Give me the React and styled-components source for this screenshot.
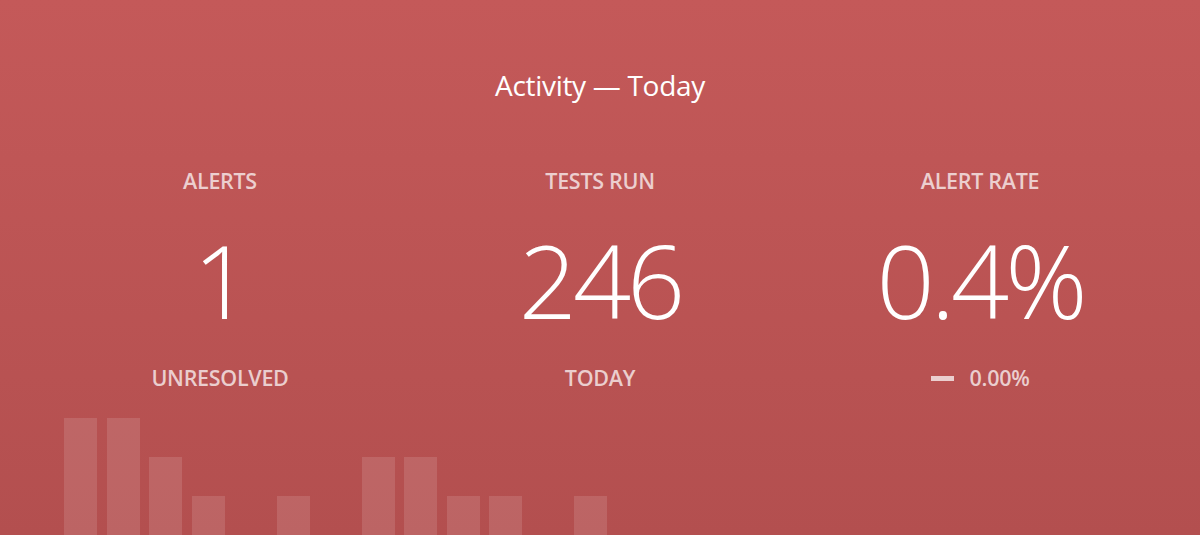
import React from 'react';
import styled, { createGlobalStyle } from 'styled-components';

const GlobalStyle = createGlobalStyle`
  html, body {
    margin: 0;
    padding: 0;
  }
  body {
    font-family: "Open Sans", "Noto Sans", sans-serif;
    -webkit-font-smoothing: antialiased;
  }
`;

const Page = styled.div`
  display: flex;
  flex-direction: column;
  height: 535px;
  overflow: hidden;
  background: linear-gradient(180deg, #c45959 0%, #b34f4f 100%);
  color: #fff;
`;

const Title = styled.h1`
  margin: 66px 0 0;
  font-size: 28px;
  font-weight: 400;
  line-height: 38px;
  text-align: center;
  letter-spacing: -0.3px;
`;

const Stats = styled.div`
  display: grid;
  grid-template-columns: repeat(3, 1fr);
  padding: 0 30px;
  margin-top: 63px;
`;

const Stat = styled.div`
  display: flex;
  flex-direction: column;
  align-items: center;
`;

const Caption = styled.div`
  font-size: 21.5px;
  font-weight: 600;
  line-height: 28px;
  text-transform: uppercase;
  color: rgba(255, 255, 255, 0.72);
  letter-spacing: -0.3px;
`;

const Value = styled.div`
  margin-top: 33px;
  font-size: 102px;
  font-weight: 300;
  line-height: 104px;
  letter-spacing: -4px;
`;

const Sub = styled(Caption)`
  display: flex;
  align-items: center;
  gap: 16px;
  margin-top: 32px;
`;

const Flat = styled.span`
  display: block;
  width: 23px;
  height: 5px;
  background: rgba(255, 255, 255, 0.72);
`;

const Chart = styled.div`
  display: flex;
  align-items: flex-end;
  gap: 9.5px;
  height: 117px;
  margin-top: auto;
  padding-left: 64px;
`;

const Bar = styled.div`
  width: 33px;
  background: rgba(255, 255, 255, 0.12);
`;

const stats = [
  { label: 'Alerts', value: '1', sub: 'Unresolved' },
  { label: 'Tests Run', value: '246', sub: 'Today' },
  { label: 'Alert Rate', value: '0.4%', sub: '0.00%', flat: true },
];

const series = [3, 3, 2, 1, 0, 1, 0, 2, 2, 1, 1, 0, 1];

export default function App() {
  return (
    <>
      <GlobalStyle />
      <Page>
        <Title>Activity — Today</Title>
        <Stats>
          {stats.map((s) => (
            <Stat key={s.label}>
              <Caption>{s.label}</Caption>
              <Value>{s.value}</Value>
              <Sub>
                {s.flat && <Flat />}
                {s.sub}
              </Sub>
            </Stat>
          ))}
        </Stats>
        <Chart>
          {series.map((v, i) => (
            <Bar key={i} style={{ height: `${(v / 3) * 117}px` }} />
          ))}
        </Chart>
      </Page>
    </>
  );
}
